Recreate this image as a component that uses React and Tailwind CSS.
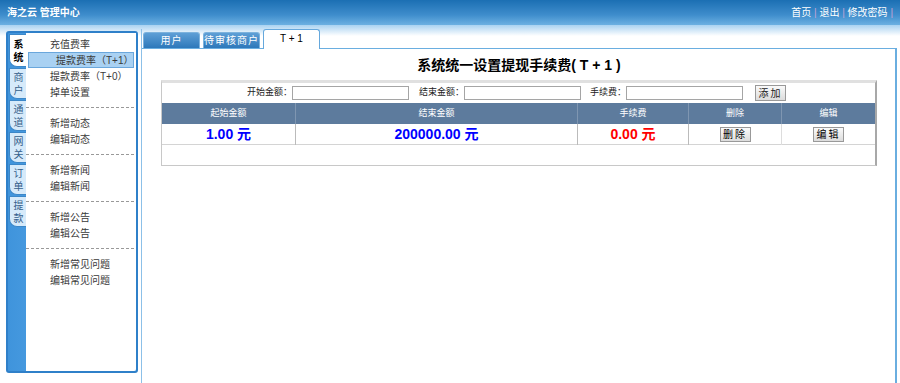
import React from 'react';

const FONT = { fontFamily: '"Liberation Sans", "Noto Sans CJK SC", sans-serif' };

const SIDE_TABS = ['系统', '商户', '通道', '网关', '订单', '提款'];

const MENU = [
    ['充值费率', '提款费率（T+1）', '提款费率（T+0）', '掉单设置'],
    ['新增动态', '编辑动态'],
    ['新增新闻', '编辑新闻'],
    ['新增公告', '编辑公告'],
    ['新增常见问题', '编辑常见问题'],
];

function Sidebar() {
    return (
        <div className="flex h-[342px] w-[132px] rounded-[3px] border-2 border-[#2f80c9] bg-[linear-gradient(to_right,#3f94dc,#6bb4ee)]">
            <div className="flex w-[18px] flex-col pt-[1px]">
                {SIDE_TABS.map((t, i) => (
                    <div key={t}
                        className={`ml-[1px] flex w-[18px] flex-col items-center justify-center rounded-bl-[8px] border border-r-0 border-[#3c87c8] text-[10px] leading-[13px] ${i === 0 ? 'h-[33px] bg-white font-bold text-black' : 'mt-[1px] h-[31px] bg-[#d6eafa] text-[#35608a]'}`}>
                        <span>{t[0]}</span><span>{t[1]}</span>
                    </div>
                ))}
            </div>
            <div className="flex-1 rounded-br-[2px] bg-white pt-[3px] pr-[2px]">
                {MENU.map((group, gi) => (
                    <div key={gi} className={gi > 0 ? 'mt-[7px] border-t border-dashed border-[#999] pt-[7px]' : ''}>
                        {group.map((m, i) => {
                            const active = gi === 0 && i === 1;
                            return (
                                <div key={m}
                                    className={`flex h-[16px] items-center text-[10px] text-[#3a3a3a] ${active ? 'ml-[2px] border border-[#6aa7dc] bg-[#a9d1f2] pl-[27px]' : 'pl-[24px]'}`}>
                                    {m}
                                </div>
                            );
                        })}
                    </div>
                ))}
            </div>
        </div>
    );
}

function Main() {
    const tabCls = 'flex h-[16px] w-[57px] items-center justify-center rounded-t-[3px] border border-b-0 border-[#7cb2dd] bg-[linear-gradient(to_bottom,#5e9fd6,#2d78ba)] text-[10px] tracking-[1px] text-white';
    const btnCls = 'flex h-[15px] w-[31px] items-center justify-center border border-[#999] bg-[linear-gradient(to_bottom,#fafafa,#dcdcdc)] text-[10px] font-normal tracking-[2px] text-black';
    return (
        <div className="ml-[3px] flex h-full flex-1 flex-col border-l border-[#8cc0e8] pr-[3px]">
            <div className="flex h-[19px] items-end gap-[3px] pl-[1px]">
                <div className={tabCls}>用户</div>
                <div className={tabCls}>待审核商户</div>
                <div className="relative -mb-px flex h-[20px] w-[57px] items-center justify-center rounded-t-[3px] border border-b-0 border-[#66a8dc] bg-white pb-[2px] text-[10px] text-black">T + 1</div>
            </div>
            <div className="flex-1 border-t border-r-2 border-[#6aaee0] bg-white pl-[19px] pr-[18px]">
                <div className="pt-[7px] text-center text-[14px] font-bold leading-[18px] text-black">系统统一设置提现手续费( T + 1 )</div>
                <div className="mt-[6px] border border-[#c8c8c8] border-t-[3px] border-t-[#e0e0e0] border-r-2 border-r-[#a8a8a8]">
                    <div className="flex h-[20px] items-center text-[9px] text-[#222]">
                        <span className="ml-[85px]">开始金额：</span>
                        <div className="h-[14px] w-[117px] border border-[#a5a5a5] bg-white" />
                        <span className="ml-[10px]">结束金额：</span>
                        <div className="h-[14px] w-[117px] border border-[#a5a5a5] bg-white" />
                        <span className="ml-[9px]">手续费：</span>
                        <div className="h-[14px] w-[117px] border border-[#a5a5a5] bg-white" />
                        <div className="ml-[12px] flex h-[16px] w-[31px] items-center justify-center border border-[#999] bg-[linear-gradient(to_bottom,#fafafa,#dcdcdc)] text-[10px] tracking-[2px]">添加</div>
                    </div>
                    <div className="grid h-[21px] grid-cols-[134px_282px_111px_93px_1fr] bg-[#5d7b9d] text-[9px] text-white">
                        {['起始金额', '结束金额', '手续费', '删除', '编辑'].map((h, i) => (
                            <div key={h} className={`flex items-center justify-center ${i < 4 ? 'border-r border-[#7f96b1]' : ''}`}>{h}</div>
                        ))}
                    </div>
                    <div className="grid h-[21px] grid-cols-[134px_282px_111px_93px_1fr] border-b border-[#d4d4d4] text-[14px] font-bold">
                        <div className="flex items-center justify-center border-r border-[#bbb] text-[#0000ff]">1.00 元</div>
                        <div className="flex items-center justify-center border-r border-[#bbb] text-[#0000ff]">200000.00 元</div>
                        <div className="flex items-center justify-center border-r border-[#bbb] text-[#ff0000]">0.00 元</div>
                        <div className="flex items-center justify-center border-r border-[#ddd]">
                            <div className={btnCls}>删除</div>
                        </div>
                        <div className="flex items-center justify-center">
                            <div className={btnCls}>编辑</div>
                        </div>
                    </div>
                    <div className="h-[20px]" />
                </div>
            </div>
        </div>
    );
}

export default function App() {
    return (
        <div className="flex h-[383px] w-[900px] flex-col overflow-hidden bg-white" style={FONT}>
            <div className="flex h-[25px] items-center justify-between bg-[linear-gradient(to_bottom,#1b6fb3,#3f8dcc_60%,#6cb0e2)] px-[7px]">
                <span className="text-[10px] font-bold text-white">海之云 管理中心</span>
                <span className="text-[10px] text-white">
                    首页 <span className="text-[#c4a3d6]">|</span> 退出 <span className="text-[#c4a3d6]">|</span> 修改密码 <span className="text-[#c4a3d6]">|</span>
                </span>
            </div>
            <div className="flex flex-1 bg-[linear-gradient(to_bottom,#a9d2f1,#ffffff_11px)] pl-[6px] pt-[4px]">
                <div className="pt-[2px]">
                    <Sidebar />
                </div>
                <Main />
            </div>
        </div>
    );
}
